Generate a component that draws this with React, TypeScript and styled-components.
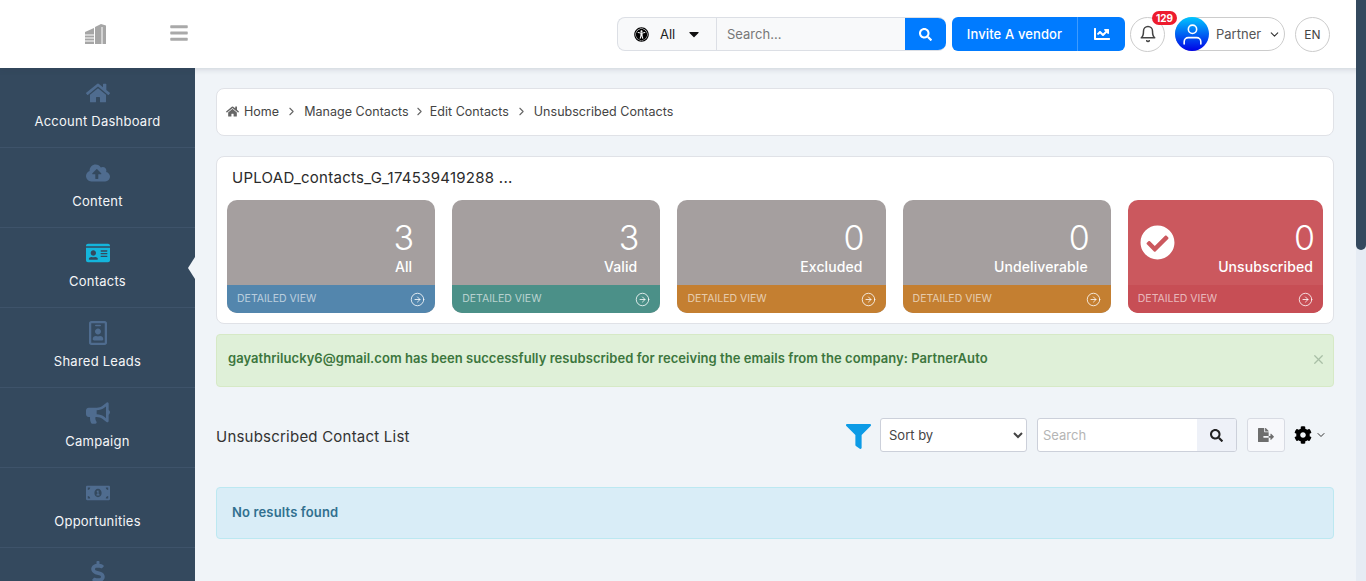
import React from 'react';
import styled, { createGlobalStyle } from 'styled-components';
import {
  FaBars, FaBullhorn, FaCaretDown, FaCheckCircle, FaChartLine, FaCloudUploadAlt, FaCog, FaDollarSign,
  FaFileExport, FaFilter, FaHome, FaIdCard, FaMoneyBillAlt, FaRegIdBadge, FaSearch, FaUniversalAccess,
} from 'react-icons/fa';
import { FiArrowRightCircle, FiBell, FiChevronDown, FiChevronRight, FiUser, FiX } from 'react-icons/fi';

const font = 'Inter, "Noto Sans", sans-serif';

const Global = createGlobalStyle`
  html, body { height: 100%; overflow: hidden; }
  body { margin: 0; background: #f0f4f8; font-family: ${font}; color: #333; }
  * { box-sizing: border-box; }
`;

const Page = styled.div`
  height: 100vh;
  overflow: hidden;
`;
const ScrollTrack = styled.div`
  position: fixed;
  z-index: 5;
  top: 0;
  right: 0;
  bottom: 0;
  width: 10px;
  background: #e6ecf4;
`;
const ScrollThumb = styled.div`
  height: 250px;
  background: #34495e;
  border-radius: 0 0 6px 6px;
`;
const Header = styled.header`
  position: relative;
  z-index: 2;
  height: 68px;
  background: #fff;
  box-shadow: 0 1px 6px rgba(40, 50, 70, 0.18);
  display: flex;
  align-items: center;
  padding: 0 36px 0 85px;
`;
const Logo = styled.svg`
  width: 21px;
  height: 20px;
  margin-top: -1px;
`;
const Burger = styled.span`
  display: flex;
  margin-left: 63px;
  margin-top: -3px;
  color: #a9a9a9;
  font-size: 20px;
`;
const Tools = styled.div`
  margin-left: auto;
  display: flex;
  align-items: center;
`;
const SearchGroup = styled.div`
  width: 329px;
  height: 34px;
  display: flex;
  border-radius: 8px;
  overflow: hidden;
  border: 1px solid #dcdfe5;
  border-right: 0;
  background: #f8f9fa;
`;
const Scope = styled.div`
  width: 99px;
  display: flex;
  align-items: center;
  gap: 11px;
  padding-left: 16px;
  border-right: 1px solid #dcdfe5;
  font-size: 13px;
  color: #222;
  svg:first-child { font-size: 15px; color: #000; }
  svg:last-child { font-size: 16px; color: #111; }
`;
const SearchText = styled.div`
  flex: 1;
  padding-left: 10px;
  display: flex;
  align-items: center;
  font-size: 13px;
  color: #777;
`;
const SearchButton = styled.div`
  width: 41px;
  background: #007bff;
  color: #fff;
  font-size: 13px;
  display: flex;
  align-items: center;
  justify-content: center;
`;
const Invite = styled.div`
  margin-left: 6px;
  width: 173px;
  height: 34px;
  background: #007bff;
  border-radius: 6px;
  color: #fff;
  display: flex;
  align-items: center;
  font-size: 13px;
  font-weight: 500;
  letter-spacing: 0.13px;
`;
const InviteLabel = styled.span`
  width: 125px;
  text-align: center;
  white-space: nowrap;
`;
const InviteChart = styled.span`
  flex: 1;
  height: 100%;
  display: flex;
  align-items: center;
  justify-content: center;
  border-left: 1px solid #3d9bff;
  font-size: 16px;
`;
const RoundBtn = styled.div<{ $ml: number }>`
  position: relative;
  width: 35px;
  height: 35px;
  margin-left: ${p => p.$ml}px;
  border: 1px solid #ccc;
  border-radius: 50%;
  display: flex;
  align-items: center;
  justify-content: center;
  font-size: 12px;
  color: #444;
  background: #fff;
`;
const Count = styled.span`
  position: absolute;
  top: -7px;
  left: 21px;
  height: 14px;
  padding: 0 4px;
  border-radius: 7px;
  background: #ed1c2e;
  color: #fff;
  font: 700 10px/14px ${font};
`;
const UserPill = styled.div`
  margin-left: 10px;
  width: 110px;
  height: 34px;
  border: 1px solid #ccc;
  border-radius: 17px;
  display: flex;
  align-items: center;
  font-size: 13px;
  color: #555;
`;
const Avatar = styled.span`
  width: 34px;
  height: 34px;
  margin: 0 7px 0 -1px;
  border-radius: 50%;
  background: linear-gradient(#00c6ff, #0000e6);
  color: #fff;
  font-size: 25px;
  display: flex;
  align-items: center;
  justify-content: center;
  svg { stroke-width: 1.5; }
`;
const PillCaret = styled.span`
  display: flex;
  margin-left: 7px;
  font-size: 13px;
  color: #333;
`;
const Body = styled.div`
  display: flex;
  align-items: stretch;
`;
const Sidebar = styled.nav`
  width: 195px;
  flex: none;
  height: 513px;
  overflow: hidden;
  background: #34495e;
`;
const Item = styled.a<{ $active?: boolean }>`
  position: relative;
  height: 80px;
  display: flex;
  flex-direction: column;
  align-items: center;
  padding-top: 13px;
  border-bottom: 1px solid #3e536a;
  color: #f4f6f8;
  font-size: 13px;
  letter-spacing: 0.24px;
  white-space: nowrap;
  ${p => p.$active && `
    &::after {
      content: '';
      position: absolute;
      right: 0;
      top: 29px;
      border: 11px solid transparent;
      border-left-width: 0;
      border-right: 7px solid #f0f4f8;
    }
  `}
`;
const ItemIcon = styled.span<{ $active?: boolean }>`
  height: 24px;
  display: flex;
  align-items: center;
  font-size: 24px;
  margin-bottom: 8px;
  color: ${p => (p.$active ? '#14b5dc' : '#4f6c8f')};
`;
const Main = styled.main`
  flex: 1;
  padding: 20px 32px 0 21px;
  display: flex;
  flex-direction: column;
`;
const Crumbs = styled.div`
  height: 48px;
  background: #fff;
  border: 1px solid #e0e2e7;
  border-radius: 8px;
  display: flex;
  align-items: center;
  padding: 0 0 2px 9px;
  font-size: 12.5px;
  letter-spacing: 0.03px;
  color: #444;
`;
const CrumbIcon = styled.span`
  display: flex;
  margin-right: 5px;
  color: #666;
  font-size: 13px;
`;
const CrumbSep = styled.span<{ $w: number }>`
  display: flex;
  justify-content: center;
  width: ${p => p.$w}px;
  color: #666;
  font-size: 13px;
`;
const Summary = styled.section`
  margin-top: 20px;
  height: 168px;
  background: #fff;
  border: 1px solid #e0e2e7;
  border-radius: 8px;
  padding: 10px 10px 0;
`;
const SummaryTitle = styled.h2`
  margin: 0 0 11px 5px;
  height: 22px;
  font-size: 15px;
  line-height: 22px;
  font-weight: 400;
  letter-spacing: 0.26px;
  color: #2b2b2b;
`;
const Tiles = styled.div`
  display: grid;
  grid-template-columns: repeat(4, 208.2px) 1fr;
  column-gap: 17px;
`;
const Tile = styled.div<{ $bg: string }>`
  position: relative;
  height: 113px;
  border-radius: 10px;
  overflow: hidden;
  background: ${p => p.$bg};
  color: #fff;
  display: flex;
  flex-direction: column;
`;
const TileTop = styled.div<{ $pr: number }>`
  flex: 1;
  text-align: right;
  padding: 18px ${p => p.$pr}px 0 0;
`;
const TileNum = styled.div`
  font-size: 34px;
  line-height: 40px;
  font-weight: 300;
  margin-right: -2px;
`;
const TileLabel = styled.div`
  font-size: 14px;
  line-height: 17px;
  font-weight: 500;
  letter-spacing: 0.1px;
`;
const TileFoot = styled.div<{ $bg: string }>`
  height: 28px;
  background: ${p => p.$bg};
  display: flex;
  align-items: center;
  justify-content: space-between;
  padding: 0 10px 2px;
  font-size: 10.5px;
  color: rgba(255, 255, 255, 0.62);
  svg { font-size: 15px; stroke-width: 1.5; margin-top: 2px; color: rgba(255, 255, 255, 0.85); }
`;
const TileCheck = styled.span`
  position: absolute;
  left: 12px;
  top: 25px;
  display: flex;
  font-size: 35px;
`;
const Alert = styled.div<{ $kind: 'success' | 'info' }>`
  position: relative;
  display: flex;
  align-items: center;
  border-radius: 4px;
  padding: 0 0 ${p => (p.$kind === 'success' ? 5 : 2)}px ${p => (p.$kind === 'success' ? 11 : 15)}px;
  font-size: 13px;
  font-weight: 600;
  letter-spacing: ${p => (p.$kind === 'success' ? 0.05 : 0.15)}px;
  height: ${p => (p.$kind === 'success' ? 53 : 52)}px;
  margin-top: ${p => (p.$kind === 'success' ? 10 : 35)}px;
  background: ${p => (p.$kind === 'success' ? '#dff0d8' : '#d9edf7')};
  border: 1px solid ${p => (p.$kind === 'success' ? '#d6e9c6' : '#bce8f1')};
  color: ${p => (p.$kind === 'success' ? '#3c763d' : '#31708f')};
`;
const Close = styled.span`
  margin: 2px 7px 0 auto;
  display: flex;
  font-size: 15px;
  color: #a9bfa6;
`;
const ListBar = styled.div`
  margin-top: 31px;
  height: 34px;
  display: flex;
  align-items: center;
`;
const ListTitle = styled.h3`
  margin: 2px 0 0;
  font-size: 15px;
  font-weight: 400;
  letter-spacing: 0.22px;
  color: #333;
`;
const FilterIcon = styled.span`
  margin-left: auto;
  display: flex;
  color: #0d9be6;
  font-size: 25px;
  margin-top: 2px;
`;
const SortSelect = styled.select`
  margin-left: 9px;
  width: 147px;
  height: 34px;
  background: #fff;
  border: 1px solid #ccd0da;
  border-radius: 3px;
  padding-left: 4px;
  font: 13px ${font};
  color: #444;
`;
const ListSearch = styled.div`
  margin-left: 10px;
  width: 200px;
  height: 34px;
  border: 1px solid #ccd0da;
  border-radius: 3px;
  background: #fff;
  display: flex;
  overflow: hidden;
`;
const ListSearchText = styled.span`
  flex: 1;
  padding-left: 5px;
  display: flex;
  align-items: center;
  font-size: 13px;
  color: #b5b5b5;
`;
const ListSearchBtn = styled.span`
  width: 39px;
  background: #eef1f8;
  color: #222;
  font-size: 13px;
  display: flex;
  align-items: center;
  justify-content: center;
`;
const ExportBtn = styled.span`
  margin-left: 10px;
  width: 38px;
  height: 34px;
  border: 1px solid #d8dbe3;
  border-radius: 3px;
  background: #f7f8fb;
  color: #6e6e6e;
  font-size: 16px;
  display: flex;
  align-items: center;
  justify-content: center;
`;
const GearMenu = styled.span`
  margin-left: 9px;
  margin-right: 7px;
  display: flex;
  align-items: center;
  gap: 3px;
  color: #000;
  font-size: 18px;
  svg:last-child { font-size: 12px; color: #333; }
`;

const navItems = [
  { label: 'Account Dashboard', icon: <FaHome /> },
  { label: 'Content', icon: <FaCloudUploadAlt /> },
  { label: 'Contacts', icon: <FaIdCard />, active: true },
  { label: 'Shared Leads', icon: <FaRegIdBadge /> },
  { label: 'Campaign', icon: <FaBullhorn /> },
  { label: 'Opportunities', icon: <FaMoneyBillAlt /> },
  { label: '', icon: <FaDollarSign /> },
];

const tiles = [
  { num: 3, label: 'All', bg: '#a59f9f', foot: '#5386ad' },
  { num: 3, label: 'Valid', bg: '#a59f9f', foot: '#4b9088' },
  { num: 0, label: 'Excluded', bg: '#a59f9f', foot: '#c47f31' },
  { num: 0, label: 'Undeliverable', bg: '#a59f9f', foot: '#c47f31' },
  { num: 0, label: 'Unsubscribed', bg: '#cb585e', foot: '#c74e55', check: true },
];

export default function App() {
  return (
    <Page>
      <Global />
      <ScrollTrack><ScrollThumb /></ScrollTrack>
      <Header>
        <Logo viewBox="0 0 21 20">
          <path fill="#a6a6a6" d="M0 8l9-4v16H0zM10 3l6-3 5 1.500V20H10z" />
          <path stroke="#fff" strokeWidth="1" d="M0 11h9M0 14h9M0 17h9M17 3v17" />
        </Logo>
        <Burger><FaBars /></Burger>
        <Tools>
          <SearchGroup>
            <Scope><FaUniversalAccess /><span>All</span><FaCaretDown /></Scope>
            <SearchText>Search...</SearchText>
            <SearchButton><FaSearch /></SearchButton>
          </SearchGroup>
          <Invite>
            <InviteLabel>Invite A vendor</InviteLabel>
            <InviteChart><FaChartLine /></InviteChart>
          </Invite>
          <RoundBtn $ml={5}>
            <FiBell size={18} />
            <Count>129</Count>
          </RoundBtn>
          <UserPill>
            <Avatar><FiUser /></Avatar>
            Partner
            <PillCaret><FiChevronDown /></PillCaret>
          </UserPill>
          <RoundBtn $ml={10}>EN</RoundBtn>
        </Tools>
      </Header>
      <Body>
        <Sidebar>
          {navItems.map(item => (
            <Item key={item.label} $active={item.active}>
              <ItemIcon $active={item.active}>{item.icon}</ItemIcon>
              {item.label}
            </Item>
          ))}
        </Sidebar>
        <Main>
          <Crumbs>
            <CrumbIcon><FaHome /></CrumbIcon>
            Home
            <CrumbSep $w={25}><FiChevronRight /></CrumbSep>
            Manage Contacts
            <CrumbSep $w={21}><FiChevronRight /></CrumbSep>
            Edit Contacts
            <CrumbSep $w={25}><FiChevronRight /></CrumbSep>
            Unsubscribed Contacts
          </Crumbs>
          <Summary>
            <SummaryTitle>UPLOAD_contacts_G_174539419288 ...</SummaryTitle>
            <Tiles>
              {tiles.map(t => (
                <Tile key={t.label} $bg={t.bg}>
                  {t.check && <TileCheck><FaCheckCircle /></TileCheck>}
                  <TileTop $pr={t.check ? 10 : 23}>
                    <TileNum>{t.num}</TileNum>
                    <TileLabel>{t.label}</TileLabel>
                  </TileTop>
                  <TileFoot $bg={t.foot}>
                    DETAILED VIEW
                    <FiArrowRightCircle />
                  </TileFoot>
                </Tile>
              ))}
            </Tiles>
          </Summary>
          <Alert $kind="success">
            gayathrilucky6@gmail.com has been successfully resubscribed for receiving the emails from the company: PartnerAuto
            <Close><FiX /></Close>
          </Alert>
          <ListBar>
            <ListTitle>Unsubscribed Contact List</ListTitle>
            <FilterIcon><FaFilter /></FilterIcon>
            <SortSelect defaultValue="">
              <option value="">Sort by</option>
            </SortSelect>
            <ListSearch>
              <ListSearchText>Search</ListSearchText>
              <ListSearchBtn><FaSearch /></ListSearchBtn>
            </ListSearch>
            <ExportBtn><FaFileExport /></ExportBtn>
            <GearMenu><FaCog /><FiChevronDown /></GearMenu>
          </ListBar>
          <Alert $kind="info">No results found</Alert>
        </Main>
      </Body>
    </Page>
  );
}
